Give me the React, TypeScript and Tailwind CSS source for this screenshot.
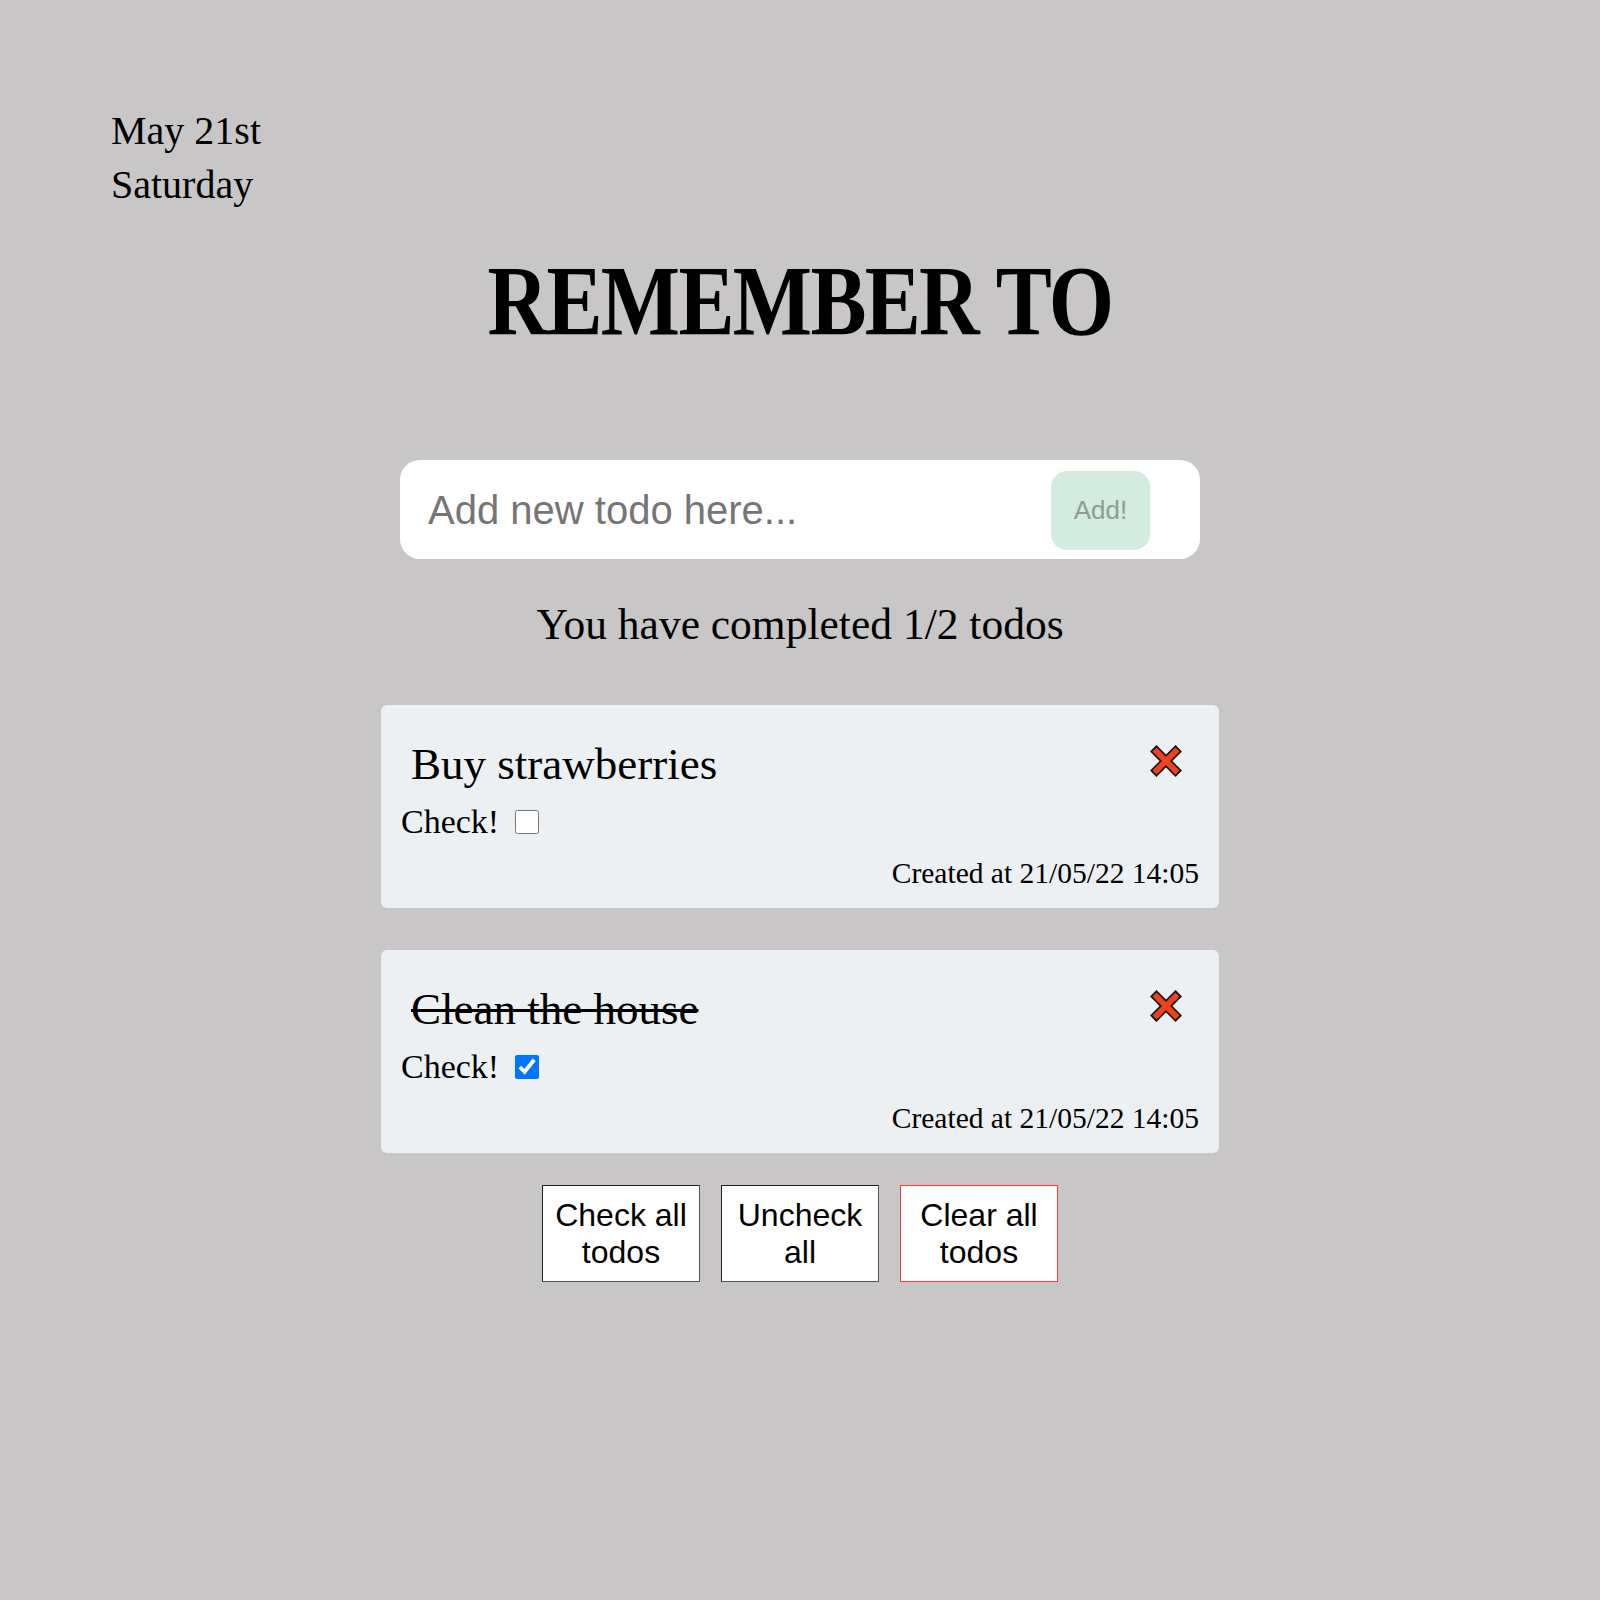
import { useState } from 'react';

const SERIF = "font-['Liberation_Serif','Times_New_Roman',serif]";
const SANS = "font-['Liberation_Sans',Arial,sans-serif]";

type Todo = { id: number; text: string; done: boolean; created: string };

function CrossIcon() {
  return (
    <svg width="34" height="34" viewBox="0 0 32 32" aria-hidden="true">
      <g strokeLinecap="butt">
        <line x1="4" y1="4" x2="28" y2="28" stroke="#111" strokeWidth="8.5" />
        <line x1="28" y1="4" x2="4" y2="28" stroke="#111" strokeWidth="8.5" />
        <line x1="5.2" y1="5.2" x2="26.8" y2="26.8" stroke="#f1401c" strokeWidth="5.5" />
        <line x1="26.8" y1="5.2" x2="5.2" y2="26.8" stroke="#f1401c" strokeWidth="5.5" />
      </g>
    </svg>
  );
}

function TodoCard({ todo, onToggle, onRemove }: { todo: Todo; onToggle: () => void; onRemove: () => void }) {
  return (
    <div className="flex h-[203px] w-[838px] flex-col rounded-md bg-[#ecf0f3] px-5 pt-[31px] pb-[17px]">
      <div className="flex h-[56px] items-center justify-between">
        <span
          className={`ml-[10px] text-[45px] leading-[56px] text-black ${todo.done ? 'line-through decoration-[3px]' : ''}`}
        >
          {todo.text}
        </span>
        <button type="button" aria-label="Remove todo" onClick={onRemove} className="mr-[16px] -mt-[6px]">
          <CrossIcon />
        </button>
      </div>
      <label className="mt-[10px] flex h-[40px] items-center gap-[16px] text-[34px] leading-[40px] text-black">
        Check!
        <input
          type="checkbox"
          checked={todo.done}
          onChange={onToggle}
          className="h-6 w-6 accent-[#0075ff]"
        />
      </label>
      <div className="mt-[13px] text-right text-[29.5px] leading-[36px] text-black">Created at {todo.created}</div>
    </div>
  );
}

export default function App() {
  const [todos, setTodos] = useState<Todo[]>([
    { id: 1, text: 'Buy strawberries', done: false, created: '21/05/22 14:05' },
    { id: 2, text: 'Clean the house', done: true, created: '21/05/22 14:05' },
  ]);
  const [draft, setDraft] = useState('');

  const done = todos.filter((t) => t.done).length;

  return (
    <div className={`min-h-screen w-full bg-[#c8c6c7] pt-[104px] pb-40 ${SERIF}`}>
      <div className="pl-[111px] text-[40px] leading-[54px] text-black">
        May 21st
        <br />
        Saturday
      </div>

      <div className="mt-[41px] flex justify-center">
        <h1 className="origin-center scale-x-[0.84] text-center text-[100px] font-bold leading-[96px] tracking-[-2px] whitespace-nowrap text-black">
          REMEMBER TO
        </h1>
      </div>

      <div className="mx-auto mt-[111px] flex h-[99px] w-[800px] items-center justify-between rounded-[20px] bg-white pr-[50px] pl-[28px]">
        <input
          value={draft}
          onChange={(e) => setDraft(e.target.value)}
          placeholder="Add new todo here..."
          className={`w-[600px] bg-transparent text-[40px] text-black outline-none placeholder:text-[#757575] ${SANS}`}
        />
        <button
          type="button"
          onClick={() => {
            if (!draft.trim()) return;
            setTodos((t) => [...t, { id: Date.now(), text: draft.trim(), done: false, created: '21/05/22 14:05' }]);
            setDraft('');
          }}
          className={`mt-[2px] h-[79px] w-[99px] rounded-[16px] bg-[#d4ebdf] text-[26px] text-[#8f9d95] ${SANS}`}
        >
          Add!
        </button>
      </div>

      <p className="mt-[37px] text-center text-[43.5px] leading-[56px] text-black">
        You have completed {done}/{todos.length} todos
      </p>

      <div className="mt-[53px] flex flex-col items-center gap-[42px]">
        {todos.map((t) => (
          <TodoCard
            key={t.id}
            todo={t}
            onToggle={() => setTodos((all) => all.map((x) => (x.id === t.id ? { ...x, done: !x.done } : x)))}
            onRemove={() => setTodos((all) => all.filter((x) => x.id !== t.id))}
          />
        ))}
      </div>

      <div className={`mt-[32px] flex justify-center gap-[21px] ${SANS}`}>
        <button
          type="button"
          onClick={() => setTodos((all) => all.map((x) => ({ ...x, done: true })))}
          className="h-[97px] w-[158px] border border-[#222] border-r-[#555] border-b-[#555] bg-white text-[32px] leading-[37px] text-black"
        >
          Check all
          <br />
          todos
        </button>
        <button
          type="button"
          onClick={() => setTodos((all) => all.map((x) => ({ ...x, done: false })))}
          className="h-[97px] w-[158px] border border-[#222] border-r-[#555] border-b-[#555] bg-white text-[32px] leading-[37px] text-black"
        >
          Uncheck
          <br />
          all
        </button>
        <button
          type="button"
          onClick={() => setTodos([])}
          className="h-[97px] w-[158px] border border-[#f03c3c] bg-white text-[32px] leading-[37px] text-black"
        >
          Clear all
          <br />
          todos
        </button>
      </div>
    </div>
  );
}
